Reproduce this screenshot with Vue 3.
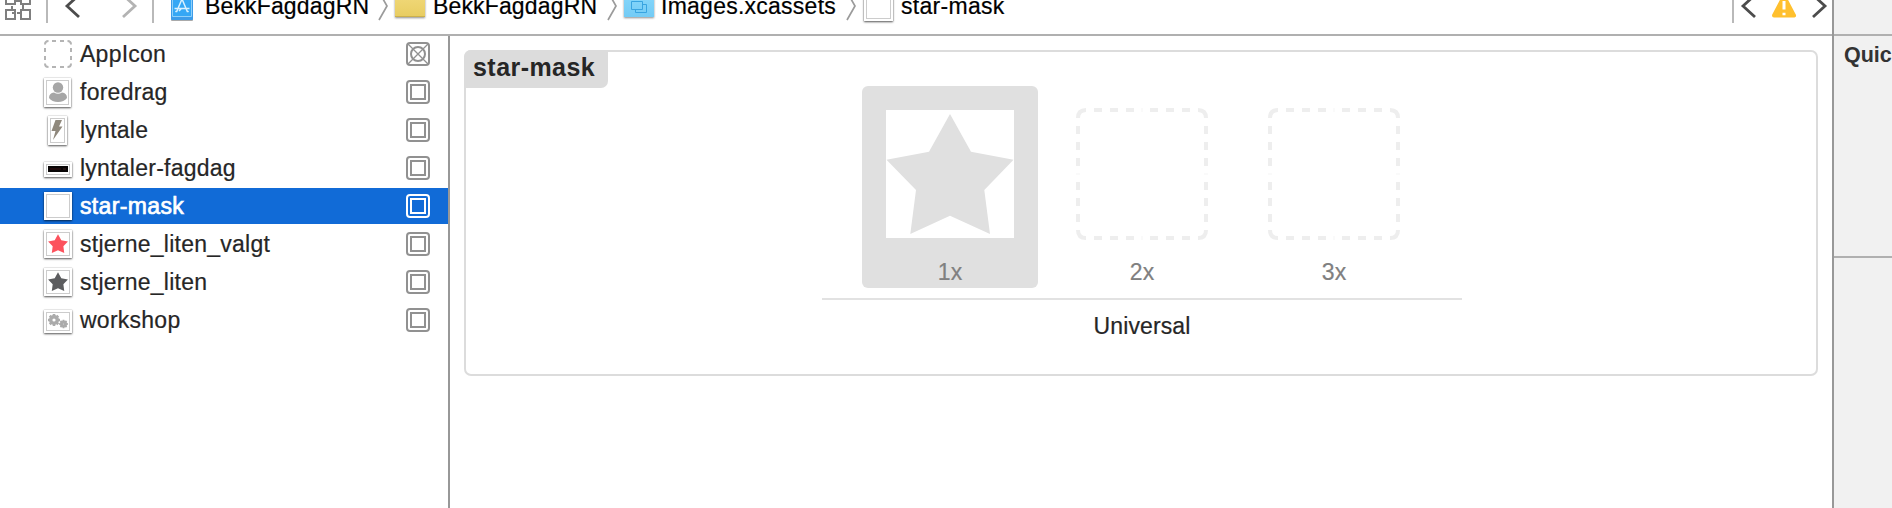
<script setup>
const assets = [
  { name: 'AppIcon', kind: 'app' },
  { name: 'foredrag', kind: 'person' },
  { name: 'lyntale', kind: 'bolt' },
  { name: 'lyntaler-fagdag', kind: 'banner' },
  { name: 'star-mask', kind: 'blank', selected: true },
  { name: 'stjerne_liten_valgt', kind: 'red' },
  { name: 'stjerne_liten', kind: 'dark' },
  { name: 'workshop', kind: 'gears' },
]
const dashes = [18, 34, 50, 74, 90, 106]
const teeth = [0, 45, 90, 135]
const star = '64,4 85,41.7 127.5,49.7 98.3,80 104,124 64,105.7 24.3,124 30,80 0.5,49.7 43,41.7'
</script>

<template>
  <div class="window">
    <div class="editor">
      <header class="bar">
        <svg class="related" width="26" height="26" viewBox="0 0 26 26" fill="none" stroke="#7f7f7f" stroke-width="2">
          <path d="M1 1h9v9H1zM16 1h9v9h-9zM1 16h9v9H1zM16 16h9v9h-9zM10 7h4M18 10v6M16 19h-4M7 16v-4M7 19h3M16 7h-3" />
        </svg>
        <i class="rule r1"></i>
        <svg class="chev back" width="16" height="26" viewBox="0 0 16 26"><path d="M14 2L2 13L14 24" /></svg>
        <svg class="chev fwd" width="16" height="26" viewBox="0 0 16 26"><path d="M2 2L14 13L2 24" /></svg>
        <i class="rule r2"></i>
        <svg class="project" width="22" height="30" viewBox="0 0 22 30">
          <rect width="22" height="30" rx="1" fill="#3d9ce9" />
          <rect x="1" y="1" width="20" height="26" fill="#35a7f5" />
          <path d="M1.5 1.5h19v25h-19z" fill="none" stroke="#8fd0fa" />
          <path d="M11 9L5.500 22M11 9L16.500 22M3.500 18.500h15M8 21l2-2M4.500 21l1 1M17.500 21l-1 1" fill="none" stroke="#d9f1ff" stroke-width="1.500" />
        </svg>
        <span class="crumb c1">BekkFagdagRN</span>
        <svg class="sep" width="10" height="30" viewBox="0 0 10 30"><path d="M1 1L9 15L1 29" /></svg>
        <i class="folder yellow"></i>
        <span class="crumb c2">BekkFagdagRN</span>
        <svg class="sep" width="10" height="30" viewBox="0 0 10 30"><path d="M1 1L9 15L1 29" /></svg>
        <i class="folder blue">
          <svg width="18" height="14" viewBox="0 0 18 14" fill="none" stroke="#38a4e0"><path d="M1.500 1.500h11v8h-11zM12.500 4.500h4v8h-11v-3" /></svg>
        </i>
        <span class="crumb c3">Images.xcassets</span>
        <svg class="sep" width="10" height="30" viewBox="0 0 10 30"><path d="M1 1L9 15L1 29" /></svg>
        <i class="thumb blank file"><b class="frame"></b></i>
        <span class="crumb c4">star-mask</span>
        <div class="issues">
          <i class="rule"></i>
          <svg class="chev prev" width="16" height="26" viewBox="0 0 16 26"><path d="M14 2L2 13L14 24" /></svg>
          <svg class="warn" width="24" height="24" viewBox="0 0 24 24">
            <path d="M12 2.500L22 21.500H2Z" fill="#ffc02e" stroke="#ffc02e" stroke-width="4" stroke-linejoin="round" />
            <path d="M12 7v8.500M12 18.700v2.600" stroke="#fff" stroke-width="3" />
          </svg>
          <svg class="chev next" width="16" height="26" viewBox="0 0 16 26"><path d="M2 2L14 13L2 24" /></svg>
        </div>
      </header>

      <div class="body">
        <nav class="list">
          <div v-for="a in assets" :key="a.name" class="row" :class="{ selected: a.selected }">
            <div class="slot">
              <svg v-if="a.kind === 'app'" width="28" height="28" viewBox="0 0 28 28" fill="none" stroke="#b4b4b4" stroke-width="2">
                <path d="M1 4.500Q1 1 4.500 1M23.500 1Q27 1 27 4.500M27 23.500Q27 27 23.500 27M4.500 27Q1 27 1 23.500" />
                <path d="M8 1h4M16 1h4M8 27h4M16 27h4M1 8v4M1 16v4M27 8v4M27 16v4" />
              </svg>
              <i v-else class="thumb" :class="a.kind">
                <b class="frame">
                  <svg v-if="a.kind === 'person'" width="20" height="22" viewBox="0 0 20 22" fill="#a6a6a6">
                    <circle cx="10" cy="6.500" r="5.200" /><path d="M1 17Q1 12 6 11.500Q10 14 14 11.500Q19 12 19 17Q16 21 10 21Q4 21 1 17Z" />
                  </svg>
                  <svg v-else-if="a.kind === 'bolt'" width="12" height="22" viewBox="0 0 12 22" fill="#8f887c">
                    <path d="M4.500 1H11L8 7.500H11.500L2 21L4.500 12H.5Z" />
                  </svg>
                  <svg v-else-if="a.kind === 'banner'" width="20" height="6" viewBox="0 0 20 6">
                    <rect width="20" height="6" fill="#090606" /><path d="M2 3h11" stroke="#3a1112" /><path d="M15 3h3" stroke="#241313" stroke-width="2" />
                  </svg>
                  <svg v-else-if="a.kind === 'red' || a.kind === 'dark'" width="20" height="20" viewBox="0 2 128 128">
                    <polygon :points="star" :fill="a.kind === 'red' ? '#fc525d' : '#5c5d5f'" />
                  </svg>
                  <svg v-else-if="a.kind === 'gears'" width="22" height="16" viewBox="0 0 22 16" fill="none" stroke="#ababab">
                    <circle cx="7" cy="7" r="3.300" stroke-width="3.400" />
                    <path v-for="t in teeth" :key="t" d="M7 1v2M7 11v2" stroke-width="2.600" :transform="`rotate(${t} 7 7)`" />
                    <circle cx="16.500" cy="11" r="2" stroke-width="3.200" />
                    <path v-for="t in teeth" :key="'s' + t" d="M16.500 6.700v2M16.500 13.300v2" stroke-width="1.800" :transform="`rotate(${t} 16.500 11)`" />
                  </svg>
                </b>
              </i>
            </div>
            <span class="name">{{ a.name }}</span>
            <svg class="kind" width="24" height="24" viewBox="0 0 24 24" fill="none" stroke="currentColor" stroke-width="2">
              <rect x="1" y="1" width="22" height="22" rx="3" />
              <template v-if="a.kind === 'app'">
                <circle cx="12" cy="12" r="7" />
                <path d="M2 2L22 22M22 2L2 22" stroke-width="1.300" />
              </template>
              <rect v-else x="5" y="5" width="14" height="14" />
            </svg>
          </div>
        </nav>

        <main class="canvas">
          <section class="set">
            <h2 class="tag"><span>star-mask</span></h2>
            <div class="group">
              <div class="wells">
                <div class="well filled">
                  <svg class="art" width="128" height="128" viewBox="0 0 128 128"><rect width="128" height="128" fill="#fff" /><polygon :points="star" fill="#e0e0e0" /></svg>
                  <span class="scale">1x</span>
                </div>
                <div v-for="s in ['2x', '3x']" :key="s" class="well">
                  <svg class="empty" width="132" height="132" viewBox="0 0 132 132" fill="none" stroke="#eeeeee" stroke-width="4">
                    <path d="M2 10Q2 2 10 2M122 2Q130 2 130 10M130 122Q130 130 122 130M10 130Q2 130 2 122" />
                    <path v-for="d in dashes" :key="d" :d="`M${d} 2h8M${d} 130h8M2 ${d}v8M130 ${d}v8`" />
                    <path d="M65 2h2M65 130h2M2 65v2M130 65v2" stroke="#fafafa" />
                  </svg>
                  <span class="scale">{{ s }}</span>
                </div>
              </div>
              <p class="idiom">Universal</p>
            </div>
          </section>
        </main>
      </div>
    </div>

    <aside class="inspector">
      <div class="top"></div>
      <div class="help">Quic</div>
    </aside>
  </div>
</template>

<style scoped>
.window {
  display: flex;
  width: 1892px;
  height: 508px;
  overflow: hidden;
  background: #fff;
  color: #262626;
  font: 23px/36px "Liberation Sans", Arial, sans-serif;
}
.editor { width: 1832px; display: flex; flex-direction: column; }
svg { display: block; flex: none; overflow: visible; }

.bar {
  display: flex;
  align-items: flex-start;
  height: 34px;
  border-bottom: 2px solid #b0b0b0;
  color: #000;
  overflow: hidden;
  flex: none;
}
.bar > * { flex: none; }
.related { margin: -6px 0 0 5px; }
.rule { width: 2px; height: 23px; background: #b9b9b9; }
.r1 { margin-left: 15px; }
.chev { fill: none; stroke: #4c4c4c; stroke-width: 2.8; margin-top: -7px; }
.back { margin-left: 17px; }
.fwd { margin-left: 40px; stroke: #b3b3b3; }
.r2 { margin-left: 15px; }
.project { margin: -10px 0 0 17px; filter: drop-shadow(0 1px 0 #aaa); }
.crumb { line-height: 26px; margin-top: -7px; white-space: nowrap; }
.c1, .c2 { width: 173px; letter-spacing: .15px; -webkit-text-stroke: .2px #000; }
.c1 { margin-left: 12px; }
.c2 { margin-left: 8px; width: 174px; }
.c3 { margin-left: 7px; width: 185px; letter-spacing: .25px; -webkit-text-stroke: .2px #000; }
.c4 { margin-left: 8px; letter-spacing: .3px; -webkit-text-stroke: .2px #000; }
.sep { fill: none; stroke: #9b9b9b; stroke-width: 1.7; margin-top: -9px; }
.folder {
  display: flex;
  align-items: center;
  justify-content: center;
  width: 30px;
  margin: -7px 0 0 7px;
  box-shadow: 0 1px 2px rgba(0, 0, 0, .45);
}
.yellow { background: linear-gradient(#f2da7c, #e8cd62); border-bottom: 1px solid #cbb04c; height: 23px; }
.blue { background: linear-gradient(#88d8fb, #73cbf5); padding-top: 3px; height: 21px; }
.issues { display: flex; align-items: flex-start; margin-left: auto; width: 100px; }
.prev { margin-left: 7px; }
.warn { margin: -6px 0 0 15px; }
.next { margin-left: 15px; }

.body { display: flex; flex: 1; }
.list {
  display: flex;
  flex-direction: column;
  gap: 2px;
  width: 448px;
  border-right: 2px solid #989898;
}
.row { display: flex; align-items: center; height: 36px; color: #919191; }
.selected { background: #116bd7; color: #fff; }
.slot { display: flex; justify-content: center; width: 32px; margin-left: 42px; }
.name { flex: 1; margin-left: 6px; color: #262626; white-space: nowrap; letter-spacing: .25px; -webkit-text-stroke: .2px #262626; }
.selected .name { color: #fff; letter-spacing: .35px; -webkit-text-stroke: .7px #fff; }
.kind { margin-right: 18px; }

.thumb {
  display: flex;
  box-sizing: border-box;
  width: 28px;
  height: 28px;
  padding: 2px;
  background: #fff;
  box-shadow: 0 1px 2px rgba(0, 0, 0, .65), 0 0 1px rgba(0, 0, 0, .3);
}
.frame {
  display: flex;
  flex: 1;
  align-items: center;
  justify-content: center;
  border: 1px solid #ccc;
  min-width: 0;
}
.person { width: 27px; height: 29px; margin-right: 1px; }
.bolt { width: 19px; height: 29px; margin-right: 2px; }
.banner { height: 15px; margin-top: 2px; }
.gears { height: 23px; margin-top: 2px; }
.file { margin: -7px 0 0 8px; width: 29px; }

.canvas { flex: 1; padding: 14px 14px 0; }
.set {
  box-sizing: border-box;
  height: 326px;
  border: 2px solid #dcdcdc;
  border-radius: 7px;
}
.tag {
  width: 144px;
  height: 38px;
  margin: -2px 0 0 -2px;
  border-radius: 7px 0 7px 0;
  background: #dcdcdc;
  font-size: 25px;
  line-height: 35px;
}
.tag span { display: block; padding-left: 9px; letter-spacing: .45px; }
.group { width: 640px; margin: -2px 0 0 356px; }
.wells { display: flex; justify-content: center; gap: 16px; height: 212px; border-bottom: 2px solid #e2e2e2; }
.well { display: flex; flex-direction: column; align-items: center; width: 176px; height: 202px; border-radius: 6px; }
.filled { background: #e0e0e0; }
.art { margin: 24px 0 2px; }
.empty { margin-top: 22px; }
.scale { margin-top: 14px; color: #808080; -webkit-text-stroke: .2px #808080; }
.idiom { margin: 8px 0 0; text-align: center; letter-spacing: .1px; -webkit-text-stroke: .2px #262626; }

.inspector { flex: 1; border-left: 2px solid #989898; background: #f1f1f1; overflow: hidden; }
.top { height: 34px; border-bottom: 2px solid #b0b0b0; }
.help { height: 220px; border-bottom: 2px solid #b0b0b0; padding-left: 10px; color: #333; font-weight: bold; font-size: 21.5px; line-height: 38px; }
</style>

<style>
body { overflow: hidden; }
</style>
